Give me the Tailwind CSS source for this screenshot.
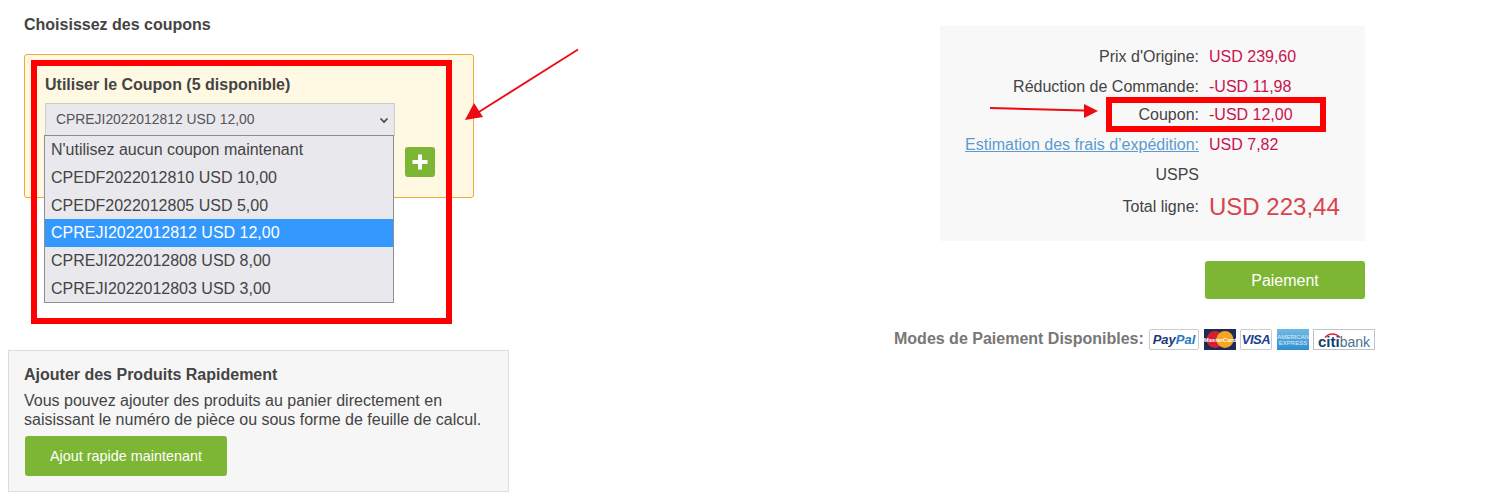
<!DOCTYPE html>
<html lang="fr">
<head>
  <meta charset="UTF-8">
  <meta name="viewport" content="width=device-width, initial-scale=1.0">
  <title>Coupons</title>
  <script src="https://cdn.jsdelivr.net/npm/@tailwindcss/browser@4"></script>
</head>
<body class="bg-white font-['Liberation_Sans',Arial,sans-serif] text-[#444] text-base">
  <div class="relative h-[500px] w-[1507px] overflow-hidden pl-2 flex items-start">

    <!-- left column -->
    <div class="w-[501px] shrink-0">
      <div class="pl-4 pt-4 h-[54px] font-bold leading-[18px]">Choisissez des coupons</div>

      <div class="relative ml-4 w-[450px] h-[144px] bg-[#fff8e3] border border-[#efa93a] rounded-[3px] pl-5 pt-[20px]">
        <div class="font-bold leading-[20px]">Utiliser le Coupon (5 disponible)</div>
        <div class="mt-[8px] w-[350px] h-[33px] bg-[#e8e8ed] border border-[#ccc] flex items-center justify-between pl-[10px] pr-[4px] text-[13.900px] text-[#555]">
          <span>CPREJI2022012812 USD 12,00</span>
          <svg class="w-[12px] h-[12px]" viewBox="0 0 12 12" fill="none" stroke="#444" stroke-width="1.6"><path d="M2.5 4.5 6 8l3.5-3.5"/></svg>
        </div>
        <button class="absolute left-[380px] top-[92px] w-[30px] h-[30px] bg-[#7db534] rounded-[3px] text-white flex items-center justify-center">
          <svg class="w-[18px] h-[18px]" viewBox="0 0 18 18" fill="#fff"><path d="M7 1.500h4V7h5.500v4H11v5.500H7V11H1.500V7H7z"/></svg>
        </button>
        <!-- open select list -->
        <ul class="absolute left-[19px] top-[80px] w-[350px] h-[168px] bg-[#e8e8ed] border border-[#8f8f8f] text-[#444] leading-[27.800px]">
          <li class="pl-[6px]">N'utilisez aucun coupon maintenant</li>
          <li class="pl-[6px]">CPEDF2022012810 USD 10,00</li>
          <li class="pl-[6px]">CPEDF2022012805 USD 5,00</li>
          <li class="pl-[6px] bg-[#3399ff] text-white">CPREJI2022012812 USD 12,00</li>
          <li class="pl-[6px]">CPREJI2022012808 USD 8,00</li>
          <li class="pl-[6px]">CPREJI2022012803 USD 3,00</li>
        </ul>
      </div>

      <div class="mt-[152px] w-[501px] h-[142px] bg-[#f6f6f6] border border-[#ddd] pl-[15px] pt-[14px]">
        <div class="font-bold leading-[20px]">Ajouter des Produits Rapidement</div>
        <p class="mt-[6px] leading-[19px]">Vous pouvez ajouter des produits au panier directement en<br>saisissant le numéro de pièce ou sous forme de feuille de calcul.</p>
        <button class="mt-[7px] ml-px block w-[202px] h-[40px] pt-px bg-[#7db534] rounded-[3px] text-white text-[14.400px]">Ajout rapide maintenant</button>
      </div>
    </div>

    <!-- right column -->
    <div class="ml-[385px] w-[481px] shrink-0 pt-[26px]">
      <div class="ml-[46px] w-[425px] h-[215px] bg-[#f8f8f8] pt-[16px] grid grid-cols-[259px_1fr] grid-rows-[30px_29px_28px_31px_29px_36px] content-start gap-x-[10px] items-center">
        <div class="text-right">Prix d'Origine:</div><div class="text-[#c8134f]">USD 239,60</div>
        <div class="text-right">Réduction de Commande:</div><div class="text-[#c8134f]">-USD 11,98</div>
        <div class="text-right">Coupon:</div><div class="text-[#c8134f]">-USD 12,00</div>
        <a class="text-right text-[#5b9bd0] underline">Estimation des frais d’expédition:</a><div class="text-[#c8134f]">USD 7,82</div>
        <div class="text-right">USPS</div><div></div>
        <div class="text-right">Total ligne:</div><div class="text-2xl text-[#d9434e]">USD 223,44</div>
      </div>

      <button class="mt-[20px] ml-[311px] block w-[160px] h-[38px] pt-px bg-[#7db534] rounded-[3px] text-white">Paiement</button>

      <div class="mt-[30px] flex items-center h-[21px]">
        <span class="font-bold text-[#777] w-[255px] whitespace-nowrap -translate-y-px">Modes de Paiement Disponibles:</span>
        <span class="w-[50px] h-[21px] border border-[#ccc] rounded-[2px] bg-white flex items-center justify-center text-[13px] font-bold italic"><span class="text-[#1b3a7a]">Pay</span><span class="text-[#2a79bd]">Pal</span></span>
        <svg class="ml-[5px]" width="32" height="21" viewBox="0 0 32 21">
          <rect width="32" height="21" fill="#1d2a5a"/>
          <circle cx="11" cy="10.500" r="8.500" fill="#d5202e"/>
          <circle cx="21" cy="10.500" r="8.500" fill="#f4a522"/>
          <text x="16" y="12.500" text-anchor="middle" font-size="6" font-weight="bold" font-style="italic" fill="#fff">MasterCard</text>
        </svg>
        <span class="ml-[4px] w-[32px] h-[21px] border border-[#ccc] rounded-[2px] bg-white flex items-center justify-center text-[13px] tracking-[-0.5px] font-bold italic text-[#1b3f8f]">VISA</span>
        <span class="ml-[5px] w-[32px] h-[21px] bg-gradient-to-b from-[#6fb9e4] to-[#2f8fd0] flex flex-col items-center justify-center text-[6px] leading-[6px] text-white/80 whitespace-nowrap overflow-hidden">
          <span>AMERICAN</span><span>EXPRESS</span>
        </span>
        <span class="relative ml-[4px] w-[62px] h-[21px] border border-[#b9c4cc] bg-white flex items-center justify-center pt-[3px] text-[14px] leading-none text-[#4a7090]">
          <span><span class="font-bold text-[15px] text-[#123f6e]">citi</span>bank</span>
          <svg class="absolute left-[10px] top-[2px]" width="20" height="6" viewBox="0 0 20 6" fill="none" stroke="#d8232a" stroke-width="1.500"><path d="M1 5.500C5 .800 12 .800 16 5.500"/></svg>
        </span>
      </div>
    </div>

    <!-- red annotations drawn over the page -->
    <div class="absolute left-[31px] top-[60px] w-[421px] h-[264px] border-[6px] border-[#ff0000]"></div>
    <div class="absolute left-[1106px] top-[97px] w-[220px] h-[35px] border-[6px] border-[#ff0000]"></div>
    <svg class="absolute left-0 top-0 pointer-events-none" width="1507" height="500" fill="#ee0a12" stroke="none">
      <path d="M578 49.500 478 112.500" stroke="#ee0a12" stroke-width="1.800" fill="none"/>
      <path d="M465 120 474 103 483 117z"/>
      <path d="M990 108 1084 110.500" stroke="#ee0a12" stroke-width="2" fill="none"/>
      <path d="M1084 104 1098 111 1084 118z"/>
    </svg>
  </div>
</body>
</html>
